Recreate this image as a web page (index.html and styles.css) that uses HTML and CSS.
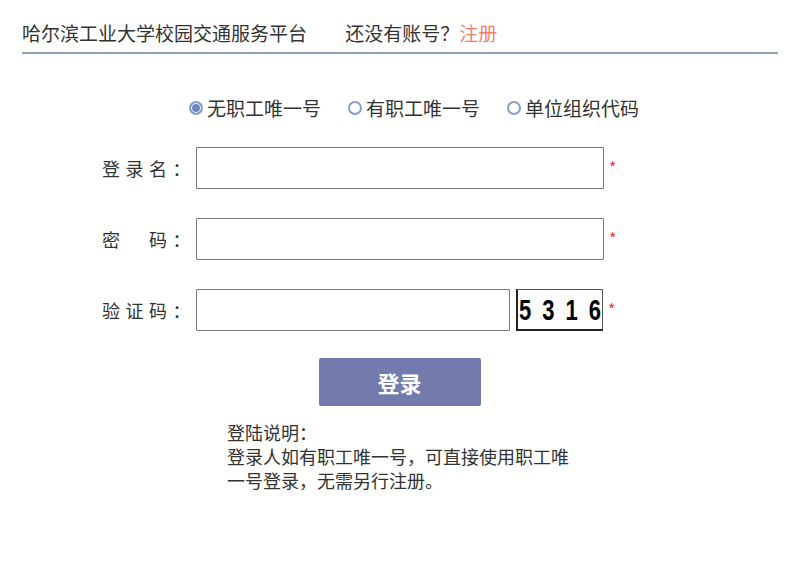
FILE: index.html
```html
<!DOCTYPE html>
<html>
<head>
    <meta charset="UTF-8">
    <meta name="viewport" content="width=device-width, initial-scale=1.0">
    <title>哈尔滨工业大学校园交通服务平台</title>
    <link rel="stylesheet" href="styles.css">
</head>
<body>

    <div class="header">
        <span class="title">哈尔滨工业大学校园交通服务平台</span>
        <span class="noAccount">还没有账号？<a href="#" class="register">注册</a></span>
    </div>

    <form id="loginForm" class="loginForm">
        <div class="radioRow">
            <label class="radioItem"><span class="radio checked"></span>无职工唯一号</label>
            <label class="radioItem"><span class="radio"></span>有职工唯一号</label>
            <label class="radioItem"><span class="radio"></span>单位组织代码</label>
        </div>

        <div class="formRow">
            <label class="fieldLabel" for="username">登录名：</label>
            <input type="text" id="username" class="field">
            <span class="required">*</span>
        </div>
        <div class="formRow">
            <label class="fieldLabel" for="password">密　码：</label>
            <input type="password" id="password" class="field">
            <span class="required">*</span>
        </div>
        <div class="formRow">
            <label class="fieldLabel" for="code">验证码：</label>
            <input type="text" id="code" class="field short">
            <div class="captcha">
                <span class="digit">5</span>
                <span class="digit">3</span>
                <span class="digit">1</span>
                <span class="digit">6</span>
            </div>
            <span class="required">*</span>
        </div>

        <div class="btnRow">
            <button type="submit" class="btn">登录</button>
        </div>

        <div class="notes">
            登陆说明：<br>
            登录人如有职工唯一号，可直接使用职工唯一号登录，无需另行注册。
        </div>
    </form>

</body>
</html>
```

FILE: styles.css
```css
body {
    margin: 0;
    padding: 0;
    font-family: "Noto Sans CJK SC", "Noto Sans", sans-serif;
    color: #333;
    background-color: #fff;
}

.header {
    margin: 0 21px 0 22px;
    padding-top: 19px;
    height: 33px;
    line-height: 28px;
    font-size: 19px;
    border-bottom: 2px solid #8ea2b9;
}

.title {
    margin-right: 34px;
}

.register {
    color: #f2806c;
    text-decoration: none;
}

.loginForm {
    margin-top: 40px;
}

.radioRow {
    display: flex;
    padding-left: 189px;
    gap: 27px;
    font-size: 19px;
    line-height: 28px;
}

.radioItem {
    display: flex;
    align-items: center;
    gap: 4px;
}

.radio {
    box-sizing: border-box;
    width: 14px;
    height: 14px;
    border: 2px solid #8a9cc8;
    border-radius: 50%;
    background: #fff;
}

.radio.checked {
    background: #6f84bf;
    box-shadow: inset 0 0 0 1px #fff;
}

.formRow {
    display: flex;
    align-items: center;
    margin-top: 25px;
}

.formRow + .formRow {
    margin-top: 29px;
}

.fieldLabel {
    width: 196px;
    padding-right: 0;
    box-sizing: border-box;
    text-align: right;
    font-size: 18px;
    letter-spacing: 5.5px;
}

.field {
    box-sizing: border-box;
    width: 408px;
    height: 42px;
    border: 1px solid #777;
    border-radius: 1px;
    padding: 0 8px;
    font-size: 16px;
}

.field.short {
    width: 314px;
}

.captcha {
    box-sizing: border-box;
    width: 87px;
    height: 42px;
    margin-left: 6px;
    padding: 0 1px;
    border: 1px solid #555;
    border-bottom: 2px solid #222;
    border-left: 2px solid #222;
    background: #fdfdfd;
    display: flex;
    justify-content: space-between;
    align-items: center;
}

.digit {
    font-family: "Liberation Sans", Arial, sans-serif;
    font-weight: bold;
    font-size: 22px;
    line-height: 24px;
    color: #000;
    transform: scaleY(1.38);
}

.required {
    color: #f33;
    font-size: 16px;
    margin-left: 5px;
    align-self: flex-start;
    margin-top: 8px;
}

.btnRow {
    display: flex;
    justify-content: center;
    margin-top: 27px;
}

.btn {
    width: 162px;
    height: 48px;
    border: none;
    border-radius: 2px;
    background-color: #737bac;
    color: #fff;
    font-family: "Noto Sans CJK SC", sans-serif;
    font-size: 22px;
    font-weight: bold;
}

.notes {
    margin: 14px 0 0 227px;
    width: 350px;
    font-size: 18px;
    line-height: 24px;
}
```
